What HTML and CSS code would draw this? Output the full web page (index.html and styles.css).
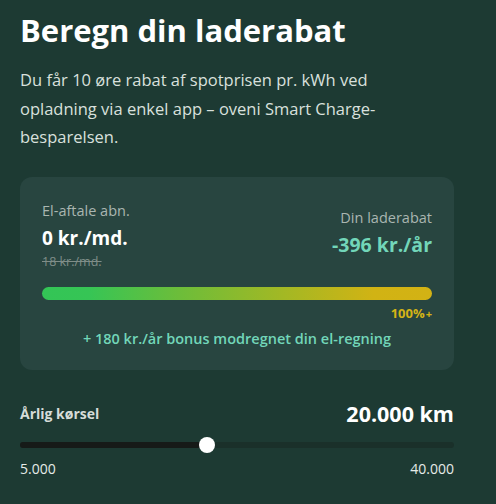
FILE: index.html
```html
<!DOCTYPE html>
<html lang="da">
<head>
<meta charset="utf-8">
<link rel="stylesheet" href="styles.css">
</head>
<body>
<main class="calc">
  <h1 class="title">Beregn din laderabat</h1>
  <p class="intro">Du får 10 øre rabat af spotprisen pr. kWh ved opladning via enkel app – oveni Smart Charge-besparelsen.</p>
  <section class="card">
    <div class="row">
      <div class="col">
        <div class="label">El-aftale abn.</div>
        <div class="value">0 kr./md.</div>
        <div class="old">18 kr./md.</div>
      </div>
      <div class="col col-right">
        <div class="label">Din laderabat</div>
        <div class="value value-teal">-396 kr./år</div>
      </div>
    </div>
    <div class="bar"></div>
    <div class="pct">100%<span class="plus">+</span></div>
    <div class="bonus">+ 180 kr./år bonus modregnet din el-regning</div>
  </section>
  <section class="drive">
    <div class="drive-head">
      <span class="drive-label">Årlig kørsel</span>
      <span class="drive-value">20.000 km</span>
    </div>
    <div class="track">
      <div class="fill" style="width: 43%"></div>
      <div class="thumb" style="left: 43%"></div>
    </div>
    <div class="scale">
      <span>5.000</span>
      <span>40.000</span>
    </div>
  </section>
</main>
</body>
</html>
```
FILE: styles.css
```css
html, body {
  margin: 0;
  padding: 0;
}
body {
  background: #1d3a33;
  font-family: "Open Sans", "Noto Sans", sans-serif;
  color: #fff;
}
.calc {
  padding: 10px 42px 20px 20px;
}
.title {
  margin: 0;
  font-size: 31px;
  font-weight: 700;
  line-height: 40px;
  color: #fff;
}
.intro {
  margin: 16px 0 0;
  font-size: 16.5px;
  line-height: 28.5px;
  color: #d9e0dd;
  max-width: 410px;
}
.card {
  margin-top: 25px;
  background: #284540;
  border-radius: 12px;
  padding: 24px 22px 21px;
}
.row {
  display: flex;
  justify-content: space-between;
  align-items: center;
}
.col {
  display: flex;
  flex-direction: column;
}
.col-right {
  align-items: flex-end;
}
.label {
  font-size: 14.5px;
  line-height: 20px;
  color: #aab6b1;
}
.value {
  font-size: 19px;
  font-weight: 700;
  line-height: 34px;
  color: #fff;
}
.value-teal {
  font-size: 19.5px;
  color: #72d6b9;
  line-height: 34px;
}
.old {
  font-size: 12.5px;
  line-height: 14px;
  color: #7f8d88;
  text-decoration: line-through;
}
.bar {
  margin-top: 18px;
  height: 13px;
  border-radius: 7px;
  background: linear-gradient(90deg, #33c556 0%, #36c555 12%, #6cbd3a 35%, #a3b824 62%, #d1b314 85%, #d3b214 100%);
}
.pct {
  margin-top: 5px;
  text-align: right;
  font-size: 13px;
  font-weight: 700;
  color: #d4b316;
  line-height: 16px;
}
.plus {
  font-size: 11px;
  margin-left: 1px;
}
.bonus {
  margin-top: 7px;
  text-align: center;
  font-size: 14.5px;
  font-weight: 600;
  color: #72d6b9;
  line-height: 20px;
}
.drive {
  margin-top: 29px;
}
.drive-head {
  display: flex;
  justify-content: space-between;
  align-items: center;
}
.drive-label {
  font-size: 14px;
  font-weight: 700;
  color: #d6dcd9;
}
.drive-value {
  font-size: 21.5px;
  font-weight: 700;
  color: #fff;
}
.track {
  position: relative;
  margin-top: 14px;
  height: 6px;
  border-radius: 3px;
  background: #1a302a;
}
.fill {
  height: 100%;
  border-radius: 3px;
  background: #161a18;
}
.thumb {
  position: absolute;
  top: 50%;
  width: 16px;
  height: 16px;
  margin: -8px 0 0 -8px;
  border-radius: 50%;
  background: #fff;
}
.scale {
  display: flex;
  justify-content: space-between;
  margin-top: 11px;
  font-size: 14px;
  color: #e6ebe9;
}
```
